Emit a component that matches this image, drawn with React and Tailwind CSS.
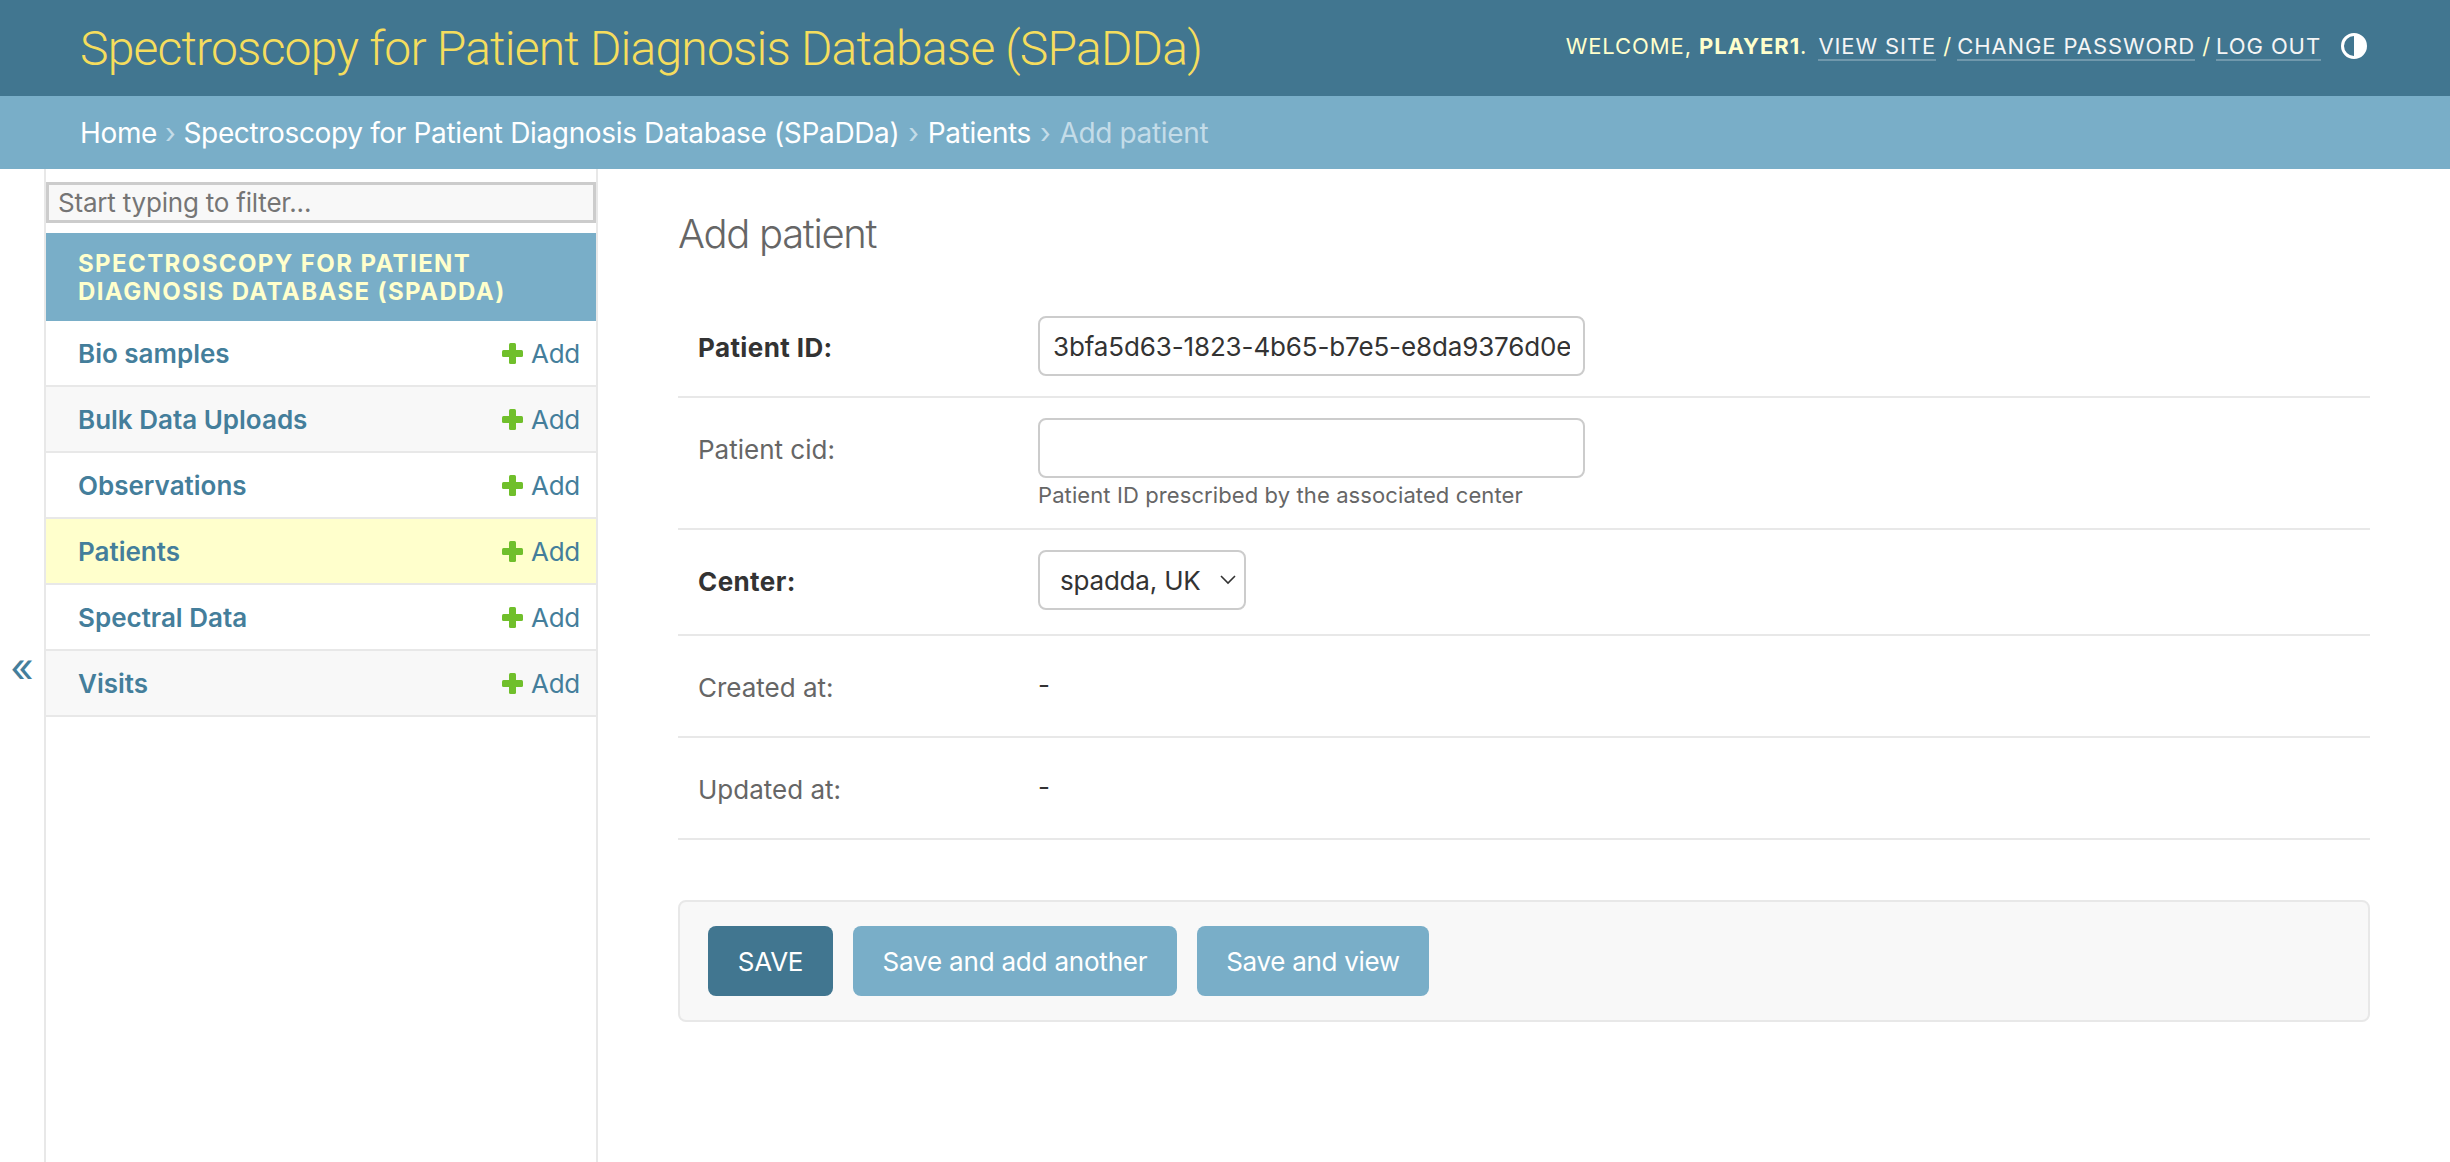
import React from 'react';

const models = [
  { name: 'Bio samples', rowClass: 'bg-white' },
  { name: 'Bulk Data Uploads', rowClass: 'bg-[#f8f8f8]' },
  { name: 'Observations', rowClass: 'bg-white' },
  { name: 'Patients', rowClass: 'bg-[#ffffcc]' },
  { name: 'Spectral Data', rowClass: 'bg-white' },
  { name: 'Visits', rowClass: 'bg-[#f8f8f8]' },
];

const PlusIcon = () => (
  <svg viewBox="0 0 21 21" className="w-[21px] h-[21px]" aria-hidden="true">
    <rect x="7" y="0" width="7" height="21" rx="1.5" fill="#70bf2b" />
    <rect x="0" y="7" width="21" height="7" rx="1.5" fill="#70bf2b" />
  </svg>
);

const ThemeIcon = () => (
  <svg viewBox="0 0 26 26" className="w-[26px] h-[26px]" aria-hidden="true">
    <circle cx="13" cy="13" r="11.5" fill="none" stroke="#fff" strokeWidth="3" />
    <path d="M13 1.5a11.5 11.5 0 0 1 0 23z" fill="#fff" />
  </svg>
);

const Header = () => (
  <div className="h-[96px] bg-[#417690] flex items-center justify-between pl-[80px] pr-[83px]">
    <div className="pt-[2px] font-['Roboto',sans-serif] text-[48px] leading-[60px] text-[#f5dd5d] font-light tracking-[-0.8px]">
      Spectroscopy for Patient Diagnosis Database (SPaDDa)
    </div>
    <div className="flex items-center gap-[20px] pb-[4px]">
      <div className="text-[22px] leading-[30px] uppercase tracking-[0.9px] text-[#ffffcc]">
        Welcome, <strong className="font-bold">player1</strong>.{' '}
        <a className="ml-[4px] text-[#f5f5f5] border-b-2 border-white/25">View site</a> /{' '}
        <a className="ml-[-2px] text-[#f5f5f5] border-b-2 border-white/25">Change password</a> /{' '}
        <a className="ml-[-2px] text-[#f5f5f5] border-b-2 border-white/25">Log out</a>
      </div>
      <ThemeIcon />
    </div>
  </div>
);

const Breadcrumbs = () => (
  <div className="h-[73px] bg-[#79aec8] flex items-center pl-[80px] text-[28px] text-[#c4dce8] tracking-[-0.35px]">
    <a className="text-white">Home</a>
    <span className="mx-[8px]">›</span>
    <a className="text-white">Spectroscopy for Patient Diagnosis Database (SPaDDa)</a>
    <span className="mx-[9px]">›</span>
    <a className="text-white">Patients</a>
    <span className="mx-[9px]">›</span>
    <span>Add patient</span>
  </div>
);

const Sidebar = () => (
  <div className="flex shrink-0">
    <div className="w-[44px] flex items-center justify-center pt-[4px]">
      <span className="text-[40px] leading-none text-[#447e9b]">«</span>
    </div>
    <div className="w-[554px] border-x-2 border-[#e8e8e8] pt-[13px]">
      <input
        placeholder="Start typing to filter..."
        className="block w-full h-[41px] bg-[#f8f8f8] border-[3px] border-[#cccccc] px-[9px] text-[26px] text-[#333333] placeholder:text-[#757575] tracking-[-0.2px]"
      />
      <div className="mt-[10px] h-[88px] pt-[2px] bg-[#79aec8] flex items-center pl-[32px] pr-[40px] text-[#ffffcc] text-[24px] leading-[28px] font-bold uppercase tracking-[1.4px]">
        Spectroscopy for Patient Diagnosis Database (SPaDDa)
      </div>
      {models.map((m) => (
        <div
          key={m.name}
          className={`h-[66px] flex items-center justify-between pl-[32px] pr-[16px] border-b-2 border-[#e8e8e8] text-[#447e9b] text-[26px] ${m.rowClass}`}
        >
          <a className="font-semibold">{m.name}</a>
          <a className="flex items-center gap-[8px]">
            <PlusIcon />
            <span className="tracking-[-0.3px]">Add</span>
          </a>
        </div>
      ))}
    </div>
  </div>
);

const Row = ({ label, required, className, children }) => (
  <div className={`flex border-b-2 border-[#e8e8e8] pl-[20px] ${className}`}>
    <label
      className={`w-[340px] shrink-0 h-[60px] pt-[3px] flex items-center text-[26px] ${
        required ? 'font-bold text-[#333333] tracking-[0.4px]' : 'text-[#666666]'
      }`}
    >
      {label}
    </label>
    <div>{children}</div>
  </div>
);

const textInputClass =
  'block w-[547px] h-[60px] bg-white border-2 border-[#cccccc] rounded-[8px] px-[13px] text-[26px] text-[#333333] tracking-[-0.13px]';

const ReadOnlyValue = () => <div className="h-[56px] flex items-center text-[26px] text-[#333333]">-</div>;

const Content = () => (
  <div className="flex-1 min-w-0 px-[80px]">
    <h1 className="text-[40px] leading-[50px] font-light text-[#666666] tracking-[-1.3px] pt-[40px]">Add patient</h1>
    <div className="pt-[37px]">
      <Row label="Patient ID:" required className="pt-[20px] pb-[20px]">
        <input readOnly value="3bfa5d63-1823-4b65-b7e5-e8da9376d0e" className={textInputClass} />
      </Row>
      <Row label="Patient cid:" className="pt-[20px] pb-[20px]">
        <input className={textInputClass} />
        <div className="mt-[5px] h-[25px] leading-[25px] text-[22px] text-[#666666] tracking-[0.1px]">
          Patient ID prescribed by the associated center
        </div>
      </Row>
      <Row label="Center:" required className="pt-[20px] pb-[24px]">
        <div className="relative w-[208px]">
          <select className="block w-full h-[60px] appearance-none bg-white border-2 border-[#cccccc] rounded-[8px] pl-[20px] text-[26px] text-[#333333] tracking-[-0.2px]">
            <option>spadda, UK</option>
          </select>
          <svg viewBox="0 0 16 10" className="absolute right-[10px] top-[25px] w-[16px] h-[10px] pointer-events-none" aria-hidden="true">
            <path d="M1 1l7 7 7-7" fill="none" stroke="#333333" strokeWidth="1.6" />
          </svg>
        </div>
      </Row>
      <Row label="Created at:" className="pt-[20px] pb-[20px]">
        <ReadOnlyValue />
      </Row>
      <Row label="Updated at:" className="pt-[20px] pb-[20px]">
        <ReadOnlyValue />
      </Row>
    </div>
    <div className="mt-[60px] h-[122px] flex items-center gap-[20px] pl-[28px] bg-[#f8f8f8] border-2 border-[#e8e8e8] rounded-[8px] text-[26px] text-white tracking-[-0.2px]">
      <button className="h-[70px] w-[125px] rounded-[8px] bg-[#417690] uppercase">Save</button>
      <button className="h-[70px] w-[324px] rounded-[8px] bg-[#79aec8]">Save and add another</button>
      <button className="h-[70px] w-[232px] rounded-[8px] bg-[#79aec8] tracking-[-0.3px]">Save and view</button>
    </div>
  </div>
);

export default function App() {
  return (
    <div className="min-h-screen flex flex-col bg-white font-['Inter',sans-serif]">
      <Header />
      <Breadcrumbs />
      <div className="flex flex-1">
        <Sidebar />
        <Content />
      </div>
    </div>
  );
}
